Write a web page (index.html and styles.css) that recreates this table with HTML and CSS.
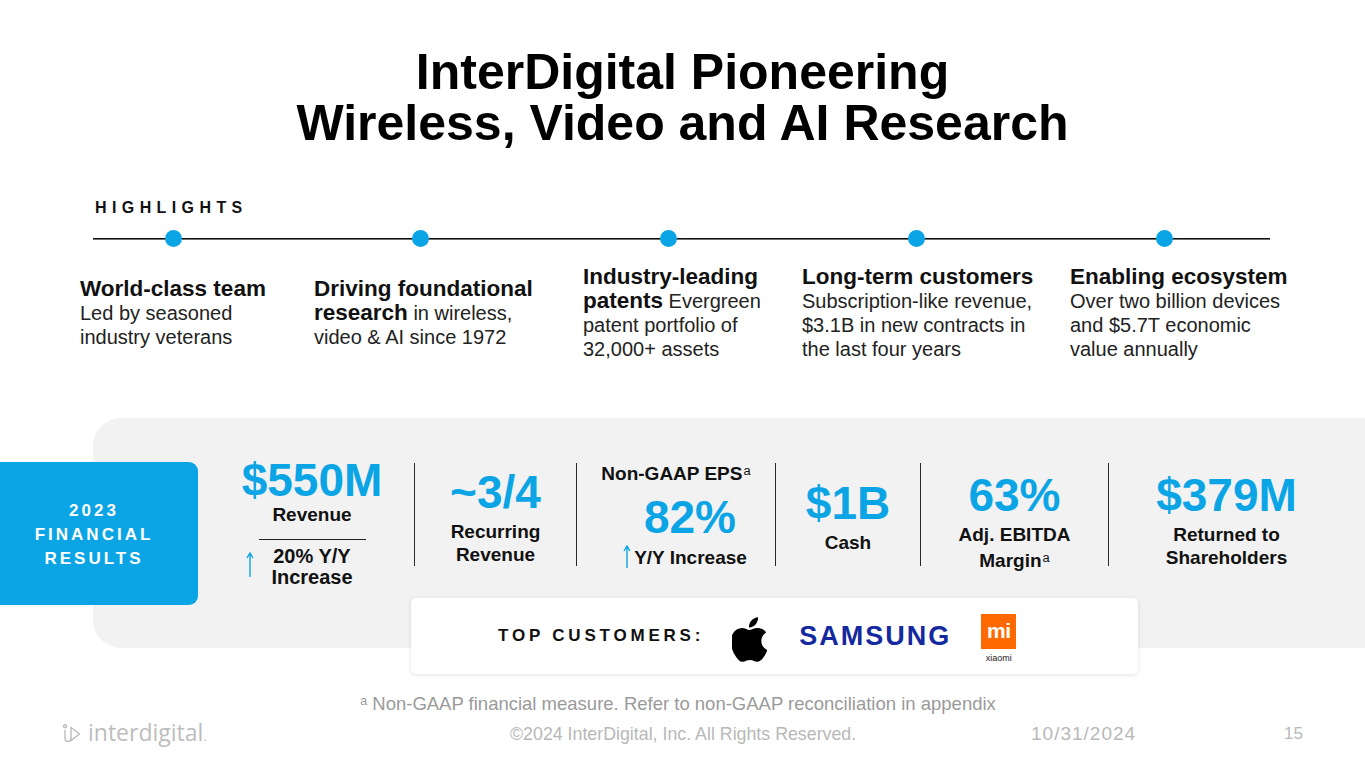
FILE: index.html
```html
<!DOCTYPE html>
<html lang="en">
<head>
<meta charset="utf-8">
<title>InterDigital Pioneering Wireless, Video and AI Research</title>
<link rel="stylesheet" href="styles.css">
</head>
<body>
<main class="slide">
  <h1 class="title">InterDigital Pioneering<br>Wireless, Video and AI Research</h1>

  <section class="highlights">
    <div class="hl-label">HIGHLIGHTS</div>
    <div class="timeline">
      <span class="dot"></span><span class="dot"></span><span class="dot"></span><span class="dot"></span><span class="dot"></span>
    </div>
    <div class="hl-grid">
      <div class="hl"><b>World-class team</b><br>Led by seasoned<br>industry veterans</div>
      <div class="hl"><b>Driving foundational</b><br><b>research</b> in wireless,<br>video &amp; AI since 1972</div>
      <div class="hl"><b>Industry-leading</b><br><b>patents</b> Evergreen<br>patent portfolio of<br>32,000+ assets</div>
      <div class="hl"><b>Long-term customers</b><br>Subscription-like revenue,<br>$3.1B in new contracts in<br>the last four years</div>
      <div class="hl"><b>Enabling ecosystem</b><br>Over two billion devices<br>and $5.7T economic<br>value annually</div>
    </div>
  </section>

  <section class="results">
    <div class="results-tag">2023<br>FINANCIAL<br>RESULTS</div>
    <div class="panel">
      <div class="stats">
        <div class="stat stat-first">
          <div class="num">$550M</div>
          <div class="lbl">Revenue</div>
          <div class="rule"></div>
          <div class="growth">
            <svg class="arrow-big" viewBox="0 0 8 25" width="8" height="25"><path d="M4 25V1.5M1 6L4 1L7 6" /></svg>
            <div class="lbl lbl-tall">20% Y/Y<br>Increase</div>
          </div>
        </div>
        <div class="stat">
          <div class="num">~3/4</div>
          <div class="lbl">Recurring<br>Revenue</div>
        </div>
        <div class="stat stat-eps">
          <div class="lbl">Non-GAAP EPS<span class="sup">a</span></div>
          <div class="num num-eps">82%</div>
          <div class="lbl lbl-yy"><svg class="arrow-small" viewBox="0 0 8 23" width="8" height="23"><path d="M4 23V1.5M1 6L4 1L7 6" /></svg>Y/Y Increase</div>
        </div>
        <div class="stat">
          <div class="num">$1B</div>
          <div class="lbl">Cash</div>
        </div>
        <div class="stat stat-top">
          <div class="num">63%</div>
          <div class="lbl">Adj. EBITDA<br>Margin<span class="sup">a</span></div>
        </div>
        <div class="stat stat-top">
          <div class="num">$379M</div>
          <div class="lbl">Returned to<br>Shareholders</div>
        </div>
      </div>

      <div class="customers">
        <span class="cust-label">TOP CUSTOMERS:</span>
        <svg class="apple" viewBox="2.8 0 18.8 24" width="35" height="45"><path d="M12.152 6.896c-.948 0-2.415-1.078-3.96-1.040-2.04.027-3.91 1.183-4.961 3.014-2.117 3.675-.546 9.103 1.519 12.09 1.013 1.454 2.208 3.09 3.792 3.039 1.52-.065 2.09-.987 3.935-.987 1.831 0 2.35.987 3.96.948 1.637-.026 2.676-1.48 3.676-2.948 1.156-1.688 1.636-3.325 1.662-3.415-.039-.013-3.182-1.221-3.22-4.857-.026-3.04 2.48-4.494 2.597-4.559-1.429-2.090-3.623-2.324-4.39-2.376-2-.156-3.675 1.09-4.61 1.09zM15.53 3.83c.843-1.012 1.4-2.427 1.245-3.83-1.207.052-2.662.805-3.532 1.818-.78.896-1.454 2.338-1.273 3.714 1.338.104 2.715-.688 3.559-1.701"/></svg>
        <span class="samsung">SAMSUNG</span>
        <span class="xiaomi">
          <span class="mi-box">mi</span>
          <span class="mi-name">xiaomi</span>
        </span>
      </div>
    </div>
  </section>

  <p class="footnote"><span class="sup">a</span> Non-GAAP financial measure. Refer to non-GAAP reconciliation in appendix</p>

  <footer class="footer">
    <div class="logo">
      <svg class="logo-icon" viewBox="0 0 19 20" width="19" height="20"><circle cx="3" cy="2.2" r="1.5"/><path d="M3 6v8.5a3 3 0 0 0 6 0"/><path d="M9 3.5L17.5 10L9 16.5Z"/></svg>
      <span class="logo-text">interdigital<span class="logo-dot">.</span></span>
    </div>
    <div class="copy">©2024 InterDigital, Inc. All Rights Reserved.</div>
    <div class="date">10/31/2024</div>
    <div class="page">15</div>
  </footer>
</main>
</body>
</html>
```

FILE: styles.css
```css
* { box-sizing: border-box; }

html, body {
  margin: 0;
  padding: 0;
  background: #ffffff;
}

body {
  font-family: "Liberation Sans", Arial, sans-serif;
  color: #1a1a1a;
}

.slide {
  width: 1365px;
  height: 768px;
  overflow: hidden;
  position: relative;
}

.title {
  margin: 47px 0 0;
  text-align: center;
  font-size: 50px;
  line-height: 51px;
  font-weight: 700;
  color: #000;
}

/* Highlights */
.hl-label {
  margin-top: 49px;
  padding-left: 95px;
  font-size: 16px;
  line-height: 20px;
  font-weight: 700;
  letter-spacing: 5.4px;
  color: #111;
}

.timeline {
  margin: 12px 0 0 93px;
  width: 1177px;
  height: 17px;
  padding: 0 97.5px 0 71.5px;
  display: flex;
  justify-content: space-between;
  align-items: center;
  background: linear-gradient(#111, #111) center / 100% 1.6px no-repeat;
}

.dot {
  width: 17px;
  height: 17px;
  border-radius: 50%;
  background: #0ba5e6;
}

.hl-grid {
  margin-top: 13px;
  height: 106px;
  padding-left: 80px;
  display: grid;
  grid-template-columns: 234px 269px 219px 268px 1fr;
  align-items: center;
}

.hl {
  font-size: 20px;
  line-height: 24px;
  white-space: nowrap;
  color: #222;
}

.hl b {
  font-size: 22.5px;
  color: #111;
}

/* Results */
.results {
  position: relative;
  margin-top: 52px;
}

.results-tag {
  position: absolute;
  left: 0;
  top: 44px;
  z-index: 2;
  width: 198px;
  height: 143px;
  border-radius: 0 9px 9px 0;
  background: #0ba5e6;
  color: #fff;
  display: flex;
  align-items: center;
  justify-content: center;
  text-align: center;
  font-size: 17px;
  line-height: 24px;
  font-weight: 700;
  letter-spacing: 3px;
  padding: 2px 10px 0 0;
}

.panel {
  position: relative;
  margin-left: 93px;
  height: 230px;
  background: #f2f2f2;
  border-radius: 28px 0 0 28px;
}

.stats {
  padding: 45px 0 0 117px;
  display: grid;
  grid-template-columns: 204px 162px 199px 145px 188px 236px;
}

.stat {
  height: 103px;
  border-left: 1.5px solid #2a2a2a;
  display: flex;
  flex-direction: column;
  align-items: center;
  justify-content: center;
  padding-top: 8px;
  text-align: center;
}

.stat > * {
  flex-shrink: 0;
}

.stat-first {
  border-left: none;
  justify-content: flex-start;
  padding-top: 0;
}

.stat-top {
  justify-content: flex-start;
  padding-top: 12px;
}

.num {
  font-size: 46px;
  line-height: 40px;
  font-weight: 700;
  color: #0ba5e6;
  margin-bottom: 8px;
}

.lbl {
  font-size: 19px;
  line-height: 23px;
  font-weight: 700;
  color: #111;
  white-space: nowrap;
}

.sup {
  font-size: 0.68em;
  vertical-align: 0.42em;
  font-weight: 400;
  margin-left: 1px;
}

.stat-first .num {
  margin-top: -3px;
  margin-bottom: 2.5px;
}

.rule {
  width: 107px;
  height: 1.5px;
  background: #222;
  margin-top: 13px;
}

.growth {
  display: flex;
  align-items: flex-start;
  justify-content: center;
  margin-top: 5.5px;
}

.arrow-big {
  margin: 6px 17px 0 -25px;
  flex: none;
}

.arrow-big path, .arrow-small path {
  fill: none;
  stroke: #0ba5e6;
  stroke-width: 1.4;
}

.lbl-tall {
  font-size: 20px;
  line-height: 21px;
}

.stat-eps {
  justify-content: flex-start;
  padding-top: 0;
}

.stat-eps .lbl:first-child {
  margin-top: -4px;
}

.num-eps {
  margin-top: 12px;
  margin-bottom: 0;
  padding-left: 28px;
}

.lbl-yy {
  margin-top: 8px;
  padding-left: 18px;
  display: flex;
  align-items: flex-end;
}

.arrow-small {
  margin: 0 3px 1px 0;
}

/* Customers */
.customers {
  position: absolute;
  left: 318px;
  top: 180px;
  width: 727px;
  height: 76px;
  background: #fff;
  border-radius: 5px;
  box-shadow: 0 1px 4px rgba(0, 0, 0, 0.12);
  display: flex;
  align-items: center;
  padding-left: 87px;
}

.cust-label {
  font-size: 17px;
  font-weight: 700;
  letter-spacing: 3.8px;
  color: #111;
}

.apple {
  margin-left: 28px;
  margin-top: 6px;
}

.apple path {
  fill: #000;
}

.samsung {
  margin-left: 32px;
  font-size: 27px;
  font-weight: 700;
  letter-spacing: 2px;
  color: #1428a0;
}

.xiaomi {
  margin-left: 30px;
  display: flex;
  flex-direction: column;
  align-items: center;
  margin-top: 6px;
}

.mi-box {
  width: 35px;
  height: 35px;
  background: #ff6900;
  color: #fff;
  font-size: 21px;
  font-weight: 700;
  line-height: 33px;
  text-align: center;
  letter-spacing: -0.5px;
}

.mi-name {
  font-size: 9px;
  line-height: 12px;
  margin-top: 3px;
  color: #222;
}

/* Footnote & footer */
.footnote {
  margin: 43px 0 0;
  padding-right: 10px;
  text-align: center;
  font-size: 18.5px;
  line-height: 20px;
  color: #9a9a9a;
}

.footer {
  margin-top: 6px;
  display: flex;
  align-items: center;
  height: 28px;
  color: #b8b8b8;
}

.logo {
  margin-left: 62px;
  width: 448px;
  display: flex;
  align-items: center;
}

.logo-icon circle, .logo-icon path {
  fill: none;
  stroke: #bdbdbd;
  stroke-width: 1.4;
}

.logo-text {
  margin-left: 7px;
  font-family: "Open Sans", "Liberation Sans", sans-serif;
  font-size: 23px;
  line-height: 26px;
  color: #bdbdbd;
}

.logo-dot {
  font-size: 12px;
}

.copy {
  width: 521px;
  font-size: 17.8px;
}

.date {
  width: 253px;
  font-size: 19px;
  letter-spacing: 1px;
}

.page {
  font-size: 17px;
}
```
